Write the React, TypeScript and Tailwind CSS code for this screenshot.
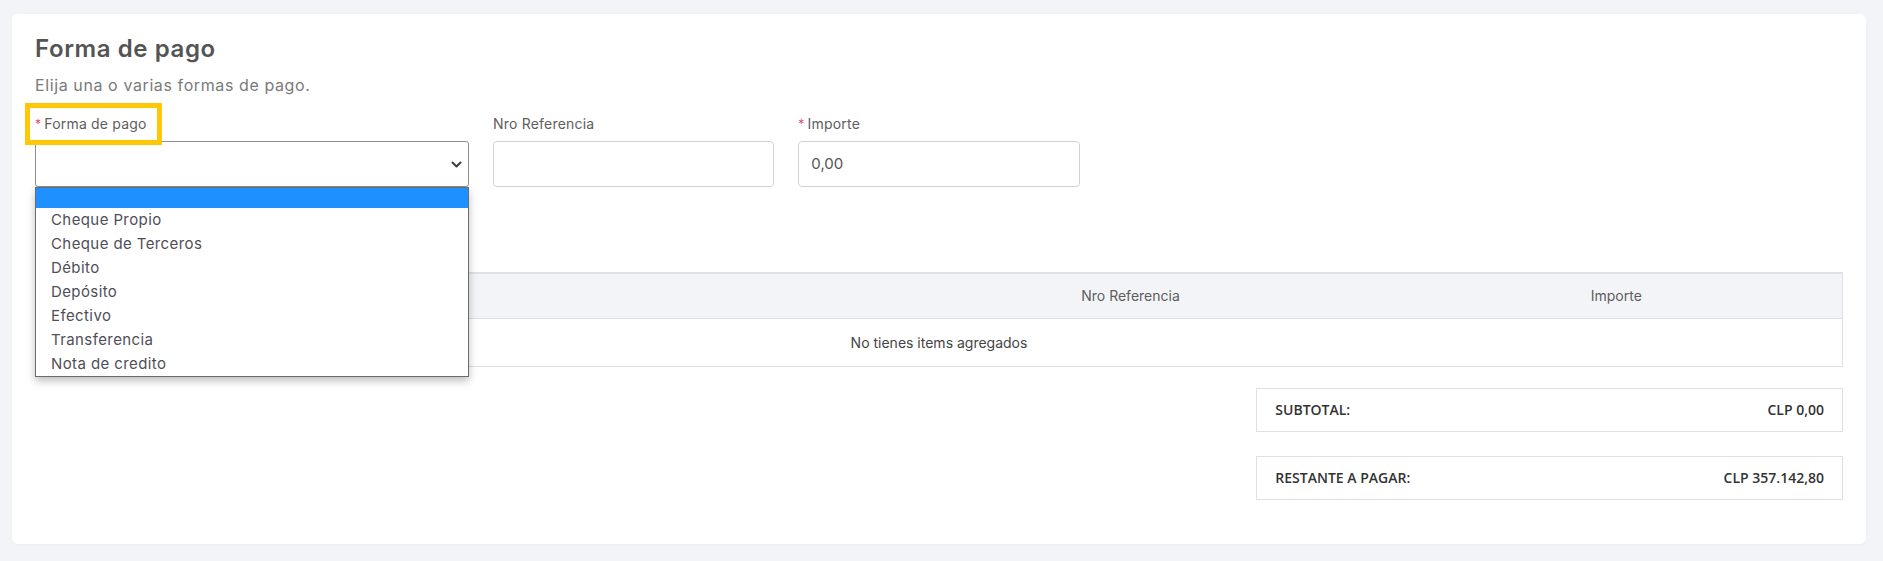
import React from 'react';

const opciones = [
  'Cheque Propio',
  'Cheque de Terceros',
  'Débito',
  'Depósito',
  'Efectivo',
  'Transferencia',
  'Nota de credito',
];

function Required() {
  return <span className="text-[#e5486f] mr-[3px] text-[12px] align-top">*</span>;
}

export default function App() {
  return (
    <div className="min-h-screen bg-[#f3f4f7] pt-[14px] pl-[12px] pr-[17px] pb-4 font-['Inter',sans-serif]">
      {/* Card */}
      <div className="bg-white rounded-md shadow-[0_1px_3px_rgba(0,0,0,0.04)] px-[23px] pt-[21px] pb-[44px]">
        <h2 className="text-[24px] leading-[28px] font-semibold tracking-[0.6px] text-[#545454]">Forma de pago</h2>
        <p className="mt-[10px] text-[16px] leading-[24px] tracking-[0.6px] text-[#7a7a7a]">Elija una o varias formas de pago.</p>

        {/* Form row */}
        <div className="grid grid-cols-12 gap-x-6 mt-[17px]">
          <div className="col-span-3 relative">
            <label className="relative block w-fit text-[14px] leading-[20px] tracking-[0.2px] text-[#5e5e5e]">
              <Required />
              Forma de pago
              <span className="absolute -left-[10px] -right-[15px] -top-[11px] -bottom-[11px] border-[5px] border-[#ffc807]" />
            </label>
            <div className="mt-[7px] h-[46px] border border-[#8f8f8f] rounded-[3px] bg-white flex items-center justify-end pr-[6px]">
              <svg width="11" height="7" viewBox="0 0 11 7" fill="none" stroke="#3d3d3d" strokeWidth="2" strokeLinecap="round" strokeLinejoin="round">
                <path d="M1.5 1.5l4 4 4-4" />
              </svg>
            </div>
            {/* Open native list */}
            <div className="absolute left-0 right-0 top-[73px] z-10 bg-white border border-[#6b6b6b] shadow-[0_4px_8px_rgba(0,0,0,0.25)]">
              <div className="h-[20px] bg-[#1e90ff]" />
              {opciones.map((o) => (
                <div key={o} className="h-[24px] leading-[24px] pl-[15px] text-[15px] tracking-[0.4px] text-[#4f4f57]">
                  {o}
                </div>
              ))}
            </div>
          </div>

          <div className="col-span-2">
            <label className="block text-[14px] leading-[20px] tracking-[0.2px] text-[#5e5e5e]">Nro Referencia</label>
            <div className="mt-[7px] h-[46px] border border-[#cfd3d8] rounded-[4px] bg-white" />
          </div>

          <div className="col-span-2">
            <label className="block text-[14px] leading-[20px] tracking-[0.2px] text-[#5e5e5e]">
              <Required />
              Importe
            </label>
            <div className="mt-[7px] h-[46px] border border-[#cfd3d8] rounded-[4px] bg-white flex items-center px-[12px] text-[15px] text-[#555]">
              0,00
            </div>
          </div>
        </div>

        {/* Items table */}
        <table className="w-full mt-[85px] border-collapse text-[14px]">
          <thead>
            <tr className="bg-[#f3f4f7] border-t-2 border-b border-[#dde1e6]">
              <th className="w-[835px] h-[45px] border-l border-[#dde1e6]" />
              <th className="w-[520px] font-normal text-[#5e5e5e]">Nro Referencia</th>
              <th className="font-normal text-[#5e5e5e] border-r border-[#dde1e6]">Importe</th>
            </tr>
          </thead>
          <tbody>
            <tr className="border-b border-x border-[#dde1e6]">
              <td colSpan={3} className="h-[48px] text-center text-[#444]">No tienes items agregados</td>
            </tr>
          </tbody>
        </table>

        {/* Totals */}
        <div className="grid grid-cols-12 gap-x-6 mt-[21px] font-['Open_Sans',sans-serif]">
          <div className="col-start-9 col-span-4 flex flex-col gap-[24px]">
            <div className="h-[44px] border border-[#dde1e6] flex items-center justify-between px-[18px] text-[14px] font-semibold text-[#333]">
              <span>SUBTOTAL:</span>
              <span>CLP 0,00</span>
            </div>
            <div className="h-[44px] border border-[#dde1e6] flex items-center justify-between px-[18px] text-[14px] font-semibold text-[#333]">
              <span>RESTANTE A PAGAR:</span>
              <span>CLP 357.142,80</span>
            </div>
          </div>
        </div>
      </div>
    </div>
  );
}
